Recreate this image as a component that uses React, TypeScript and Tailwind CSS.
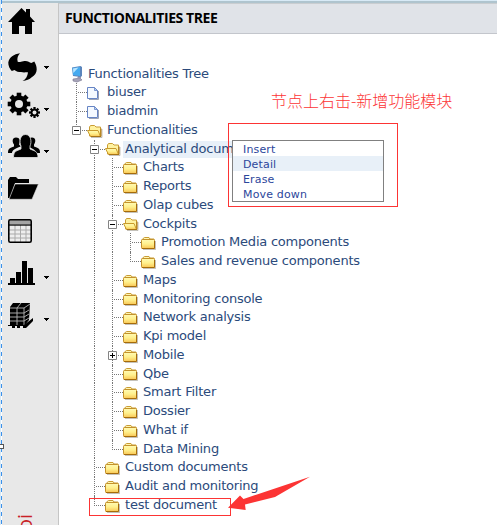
import React from "react";

type Kind = "computer" | "page" | "open" | "closed";
type Cell = "none" | "line" | "tee" | "end";
type Row = { label: string; kind: Kind; cells: Cell[]; box?: "plus" | "minus"; selected?: boolean };

const n: Cell = "none";
const l: Cell = "line";
const t: Cell = "tee";
const e: Cell = "end";

const rows: Row[] = [
  { label: "Functionalities Tree", kind: "computer", cells: [] },
  { label: "biuser", kind: "page", cells: [t] },
  { label: "biadmin", kind: "page", cells: [t] },
  { label: "Functionalities", kind: "open", cells: [e], box: "minus" },
  { label: "Analytical docume", kind: "open", cells: [n, t], box: "minus", selected: true },
  { label: "Charts", kind: "closed", cells: [n, l, t] },
  { label: "Reports", kind: "closed", cells: [n, l, t] },
  { label: "Olap cubes", kind: "closed", cells: [n, l, t] },
  { label: "Cockpits", kind: "open", cells: [n, l, t], box: "minus" },
  { label: "Promotion Media components", kind: "closed", cells: [n, l, l, t] },
  { label: "Sales and revenue components", kind: "closed", cells: [n, l, l, e] },
  { label: "Maps", kind: "closed", cells: [n, l, t] },
  { label: "Monitoring console", kind: "closed", cells: [n, l, t] },
  { label: "Network analysis", kind: "closed", cells: [n, l, t] },
  { label: "Kpi model", kind: "closed", cells: [n, l, t] },
  { label: "Mobile", kind: "closed", cells: [n, l, t], box: "plus" },
  { label: "Qbe", kind: "closed", cells: [n, l, t] },
  { label: "Smart Filter", kind: "closed", cells: [n, l, t] },
  { label: "Dossier", kind: "closed", cells: [n, l, t] },
  { label: "What if", kind: "closed", cells: [n, l, t] },
  { label: "Data Mining", kind: "closed", cells: [n, l, e] },
  { label: "Custom documents", kind: "closed", cells: [n, t] },
  { label: "Audit and monitoring", kind: "closed", cells: [n, t] },
  { label: "test document", kind: "closed", cells: [n, e] },
];

function NodeIcon({ kind }: { kind: Kind }) {
  if (kind === "computer")
    return (
      <svg width="18" height="18" viewBox="0 0 18 18" className="ml-[3px] shrink-0">
        <path d="M3 14l7-1 2 2-5 2-4-1z" fill="#a6a3b8" stroke="#77758f" strokeWidth=".6" />
        <path d="M8 11h3v3H7z" fill="#9695b0" />
        <path d="M2 2.500l8.500-1.500 1.500 1v9l-1.500 1L3 11z" fill="#5b86bd" />
        <path d="M2.500 3l7.500-1v9l-7-1z" fill="#45aaf0" />
        <path d="M3 3.400l5.500-.8L3.300 8z" fill="#b9e6ff" />
      </svg>
    );
  if (kind === "page")
    return (
      <svg width="18" height="18" viewBox="0 0 18 18" className="ml-[1px] shrink-0">
        <path d="M3 15.500h9.500V7" fill="none" stroke="#9aa2b5" />
        <path d="M1.500 3.500h7l3 3v8h-10z" fill="#f4f9ff" stroke="#6684c4" />
        <path d="M8.500 3.500v3h3z" fill="#b9d3f5" stroke="#6684c4" strokeWidth=".8" />
      </svg>
    );
  return (
    <svg width="18" height="18" viewBox="0 0 18 18" className="ml-[2px] shrink-0">
      <defs>
        <linearGradient id="folder" x1="0" y1="0" x2="0" y2="1">
          <stop offset="0" stopColor="#fffab4" />
          <stop offset=".5" stopColor="#fff08c" />
          <stop offset="1" stopColor="#f9c655" />
        </linearGradient>
      </defs>
      {kind === "closed" ? (
        <>
          <path d="M2 15.500h12.500V7" fill="none" stroke="#8b8677" strokeOpacity=".5" />
          <path d="M1.500 6V5l2-1.500h4.500L9 5h4v1z" fill="#fff6b0" stroke="#c99c35" />
          <rect x=".5" y="5.500" width="13" height="9" rx=".8" fill="url(#folder)" stroke="#c4922c" />
          <path d="M13.500 7v7.500H1" fill="none" stroke="#a66c0a" />
        </>
      ) : (
        <>
          <path d="M4 15.500h11V7" fill="none" stroke="#8b8677" strokeOpacity=".5" />
          <path d="M2.500 7V5l1-1.500h4L9 5h4.500v9h-11z" fill="#fff2a0" stroke="#c99c35" />
          <path d="M.5 8.500h10.500l2.500 6h-10z" fill="url(#folder)" stroke="#c99a2c" />
          <path d="M14 6.500v8H4" fill="none" stroke="#a97515" />
        </>
      )}
    </svg>
  );
}

function Guide({ cell, box }: { cell: Cell; box?: "plus" | "minus" }) {
  const stem =
    cell === "none" ? "" : cell === "end" ? "h-[10px] border-l border-dotted border-[#777]" : "h-full border-l border-dotted border-[#777]";
  return (
    <span className="relative block h-full w-[18px] shrink-0 pl-[9px]">
      <span className={`block ${stem}`} />
      {(cell === "tee" || cell === "end") && (
        <span className="absolute left-[11px] top-[9px] w-[9px] border-t border-dotted border-[#777]" />
      )}
      {box && (
        <svg width="9" height="9" viewBox="0 0 9 9" className="absolute left-[5px] top-[5px]">
          <path d="M.5.5h8v8h-8z" fill="#fff" stroke="#848484" />
          <path d={box === "plus" ? "M2 4.500h5M4.500 2v5" : "M2 4.500h5"} stroke="#000" />
        </svg>
      )}
    </span>
  );
}

function TreeRow({ row }: { row: Row }) {
  return (
    <li className="flex h-[19px] items-center nth-[4n+1]:h-[18px]">
      {row.cells.map((c, i) => (
        <Guide key={i} cell={c} box={i === row.cells.length - 1 ? row.box : undefined} />
      ))}
      <NodeIcon kind={row.kind} />
      <span
        className={`block h-[17px] whitespace-nowrap pl-[2px] text-[13px] leading-[15px] tracking-[-0.22px] text-[#2b4a7b] ${
          row.selected ? "w-[109px] bg-[#e8f0f8]" : ""
        } ${row.kind === "computer" ? "-ml-[2px]" : row.kind === "page" ? "ml-[1px]" : ""}`}
      >
        {row.label}
      </span>
    </li>
  );
}

const gear = (cx: number, cy: number, r: number, w: number, h: number) =>
  [0, 45, 90, 135, 180, 225, 270, 315].map((a) => (
    <rect key={a} x={cx - w / 2} y={cy - r} width={w} height={h} transform={`rotate(${a} ${cx} ${cy})`} />
  ));

function Tool({ children, caret }: { children: React.ReactNode; caret?: boolean }) {
  return (
    <div className="flex h-[42px] shrink-0 items-center first:h-[39px] first:items-start">
      <svg width="34" height="32" viewBox="0 0 34 32" className="shrink-0 overflow-visible">
        {children}
      </svg>
      {caret && (
        <svg width="5" height="3" viewBox="0 0 5 3" className="ml-[2px] mt-[6px]" shapeRendering="crispEdges">
          <path d="M0 0h5v1H4v1H3v1H2V2H1V1H0z" />
        </svg>
      )}
    </div>
  );
}

function Sidebar() {
  return (
    <aside className="flex h-full w-[57px] shrink-0 flex-col border-r border-[#c5c5c5] bg-[#e8e8e8] pl-[6px] pt-[1px]">
      <Tool>
        <path d="M0 18L13.500 4l4.500 4.500V5h4v7.500l5 5.500h-3v12h-7v-8h-6v8H4V18z" />
      </Tool>
      <Tool caret>
        <path d="M12 5.300C6 6 1 9.500.3 14.500c-.2 3 1.500 6.500 3.500 8.500l2.700-1c2 1.700 4 2 6.500 2 3 1 5.500 0 7 .5-.5 3.500-2 7-5.500 8.500 4-.3 7-1.500 9.200-3.700 3-2 5-4.500 5-7.800 0-3-.9-5.500-2.400-8l-3 1.500c-2.300-.8-4-2.800-8-1.800-3 .8-4 .8-5.600.5C8.700 10.500 10 7.500 12 5.300z" />
      </Tool>
      <Tool caret>
        <circle cx="11" cy="14" r="8.500" />
        {gear(11, 14, 11.300, 4.600, 5)}
        <circle cx="11" cy="14" r="4" fill="#e8e8e8" />
        <circle cx="26.500" cy="22.500" r="3.800" />
        {gear(26.500, 22.500, 5.500, 2.300, 3)}
        <circle cx="26.500" cy="22.500" r="2" fill="#e8e8e8" />
      </Tool>
      <Tool caret>
        <g transform="translate(0 -3)">
          <path d="M0 24c0-5 2-5 6-6.500v-2C4 13 4 8.500 8 8.500s4.500 3.500 3 7l2 2C8 19 4 21 4 24zM32 24c0-5-2-5-6-6.500v-2C28 13 28 8.500 24 8.500s-4.500 3.500-3 7l-2 2c5 1.500 9 3.500 9 6.500z" />
          <path d="M5.500 28.500c0-6.500 3-6.500 7.500-8.500v-3c-2-4-1-11.500 4.500-11.500S24 13 22 17v3c4.500 2 8 2 8 8.500z" stroke="#e8e8e8" strokeWidth=".8" />
        </g>
      </Tool>
      <Tool>
        <path d="M0 24V6l2-3h6l2 2h11v4H7L2 24z" />
        <path d="M7 10h23.500L24 25.300H1z" stroke="#e8e8e8" strokeWidth=".6" />
      </Tool>
      <Tool>
        <rect x="1" y="4" width="22" height="22" fill="#eee" />
        <path d="M1.500 4h21v4h-21z" fill="#a5a5a5" />
        <path d="M1 14h22M1 18h22M1 22h22M7 9v17M12.500 9v17M18 9v17" stroke="#aaa" />
        <rect x=".8" y="3.800" width="22.400" height="22.400" rx="1.500" fill="none" stroke="#000" strokeWidth="1.600" />
        <path d="M1 9h22" stroke="#000" strokeWidth="1.300" />
      </Tool>
      <Tool caret>
        <path d="M0 25h27v2H0zM2 20h5v6H2zM8 14h5v12H8zM14 3h5v23h-5zM20 10h5v16h-5z" />
      </Tool>
      <Tool caret>
        <g transform="translate(0 -1)">
          <path d="M5 4h17l-1 17-4 5H2V8z" />
          <path d="M2 9h14l6-4M2 14h14l5-3M2 18h14l5-3M2 22h14l5-3M9 26V9l4-5M16 26V9" fill="none" stroke="#b5b5b5" strokeWidth=".9" />
          <path d="M0 26h16l9-7v3l-7 7h-3v-2h-3v2H9v-2H7v2H4v-2H0z" />
        </g>
      </Tool>
      <div className="mt-[172px] flex h-[30px] w-[33px] shrink-0 justify-center">
        <span className="h-[22px] rotate-180 text-[20px] leading-[22px] text-[#c92127] [writing-mode:vertical-rl] font-['Open_Sans',sans-serif]">
          oi
        </span>
      </div>
    </aside>
  );
}

export default function App() {
  return (
    <div className="relative flex h-[525px] w-[497px] overflow-hidden bg-white font-['DejaVu_Sans',Verdana,sans-serif]">
      <div className="w-[2px] shrink-0 border-l border-[#d5e7f5] bg-[repeating-linear-gradient(to_bottom,#3a91ec_0,#3a91ec_4px,#fff_4px,#fff_8px)]" />
      <div className="flex min-w-0 grow flex-col">
        <div className="h-[3px] shrink-0 border-b-2 border-[#afc4ce] bg-[#d8eaf6]" />
        <div className="flex min-h-0 grow">
          <Sidebar />
          <main className="min-w-0 grow">
            <h1 className="flex h-[31px] items-center border-b border-t border-b-[#c3c6cc] border-t-[#c9cdd0] bg-[#e0e3e8] pb-[2px] pl-[6px] font-['Open_Sans',sans-serif] text-[14px] font-bold tracking-[-0.43px] text-black">
              FUNCTIONALITIES TREE
            </h1>
            <ul className="pl-[8px] pt-[31px]">
              {rows.map((row) => (
                <TreeRow key={row.label} row={row} />
              ))}
            </ul>
          </main>
        </div>
      </div>

      <span className="absolute left-0 top-[444px] h-[5px] w-[4px] border border-l-0 border-[#555] bg-white" />
      <p className="absolute left-[271px] top-[90px] whitespace-nowrap font-['Noto_Sans_CJK_SC',sans-serif] text-[16px] font-light leading-[20px] text-[#fc3434]">
        节点上右击-新增功能模块
      </p>
      <div className="absolute left-[228px] top-[123px] h-[84px] w-[170px] border border-[#fc3434]" />
      <ul className="absolute left-[232px] top-[140px] h-[62px] w-[152px] border border-[#808080] bg-white text-[11px] leading-[15px] tracking-[0.15px] text-[#2c469b]">
        {["Insert", "Detail", "Erase", "Move down"].map((item) => (
          <li key={item} className={`h-[15px] pl-[10px] pt-[1px] ${item === "Detail" ? "bg-[#e8f0f8]" : ""}`}>
            {item}
          </li>
        ))}
      </ul>
      <div className="absolute left-[89px] top-[498px] h-[18px] w-[142px] border border-[#fc3434]" />
      <svg width="84" height="36" viewBox="0 0 84 36" className="absolute left-[227px] top-[476px]">
        <path d="M83 .7L48 21 18 28.500l.7 5.500L1 31.700 13 19.500l3.500 3.500z" fill="#fc3434" />
      </svg>
    </div>
  );
}
